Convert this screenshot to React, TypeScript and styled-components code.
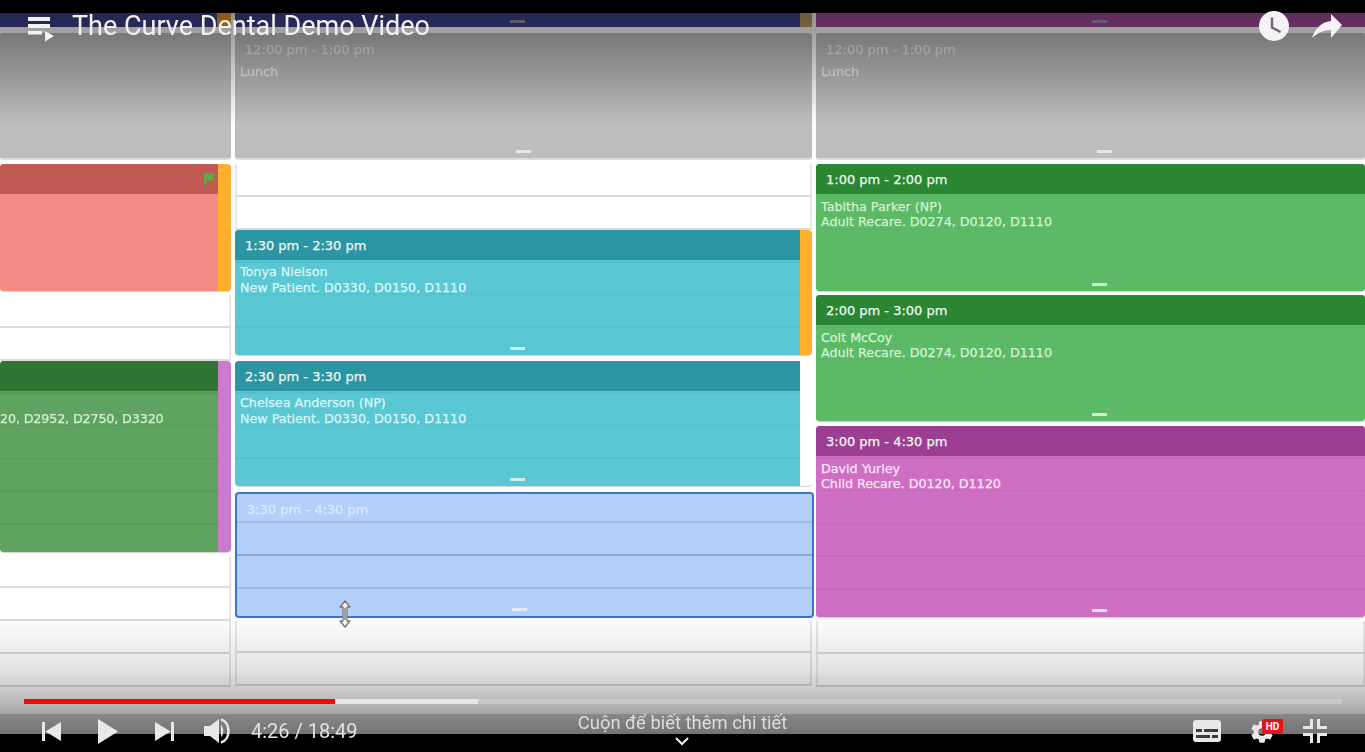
import React from "react";
import styled, { createGlobalStyle } from "styled-components";

const Global = createGlobalStyle`
  html, body { margin: 0; padding: 0; background: #000; overflow: hidden; }
  #root { width: 1365px; height: 752px; }
`;

const Stage = styled.div`
  position: relative;
  width: 1365px;
  height: 752px;
  background: #000;
  display: flex;
  flex-direction: column;
  overflow: hidden;
`;
const Letterbox = styled.div<{ $h: number }>`
  flex: 0 0 ${(p) => p.$h}px;
  background: #000;
`;
const Video = styled.div`
  position: relative;
  flex: 1;
  background: #fff;
  overflow: hidden;
`;
const Schedule = styled.div`
  display: grid;
  grid-template-columns: 231px 577px 549px;
  column-gap: 4px;
  height: 100%;
  filter: blur(0.5px);
  font-family: "DejaVu Sans", sans-serif;
  font-size: 12.7px;
  -webkit-text-stroke: 0.25px currentColor;
`;
const Column = styled.div`
  display: flex;
  flex-direction: column;
  height: 100%;
`;
const Sliver = styled.div<{ $bg: string; $strip: string; $stripW: number }>`
  position: relative;
  height: 14px;
  flex: none;
  margin-bottom: 6px;
  background: ${(p) => p.$bg};
  border-right: ${(p) => p.$stripW}px solid ${(p) => p.$strip};
`;
const Lunch = styled.div`
  position: relative;
  flex: none;
  height: 127px;
  margin-bottom: 4px;
  background: #bdbdbd;
  border-radius: 3px;
  border-bottom: 2px solid #dcdcdc;
  box-sizing: border-box;
  color: #efefef;
`;
const LunchTime = styled.div`
  height: 31px;
  padding-left: 10px;
  font-size: 13px;
  line-height: 33px;
  opacity: 0.8;
`;
const LunchLabel = styled.div`
  padding-left: 5px;
  line-height: 15px;
`;
const Slot = styled.div<{ $edge?: boolean }>`
  flex: none;
  height: 32.75px;
  box-sizing: border-box;
  background: #fff;
  border-bottom: 2px solid #dcdcdc;
  border-right: 2px solid #e8e8e8;
  border-left: ${(p) => (p.$edge ? "none" : "2px solid #e8e8e8")};
`;
const Appointment = styled.div<{ $h: number; $gap: number; $body: string; $strip?: string }>`
  position: relative;
  flex: none;
  display: flex;
  height: ${(p) => p.$h}px;
  margin-bottom: ${(p) => p.$gap}px;
  border-radius: 4px;
  overflow: hidden;
  background: ${(p) => p.$strip || p.$body};
  box-shadow: 0 1px 0 #d4d4d4;
`;
const ApptMain = styled.div<{ $body: string; $line: string }>`
  flex: 1;
  min-width: 0;
  display: flex;
  flex-direction: column;
  background-color: ${(p) => p.$body};
  background-image: repeating-linear-gradient(
    to bottom,
    transparent 0,
    transparent 31px,
    ${(p) => p.$line} 31px,
    ${(p) => p.$line} 32.75px
  );
`;
const Strip = styled.div<{ $w: number }>`
  flex: 0 0 ${(p) => p.$w}px;
`;
const ApptHead = styled.div<{ $bg: string }>`
  position: relative;
  flex: none;
  height: 30px;
  padding-left: 10px;
  font-size: 13px;
  line-height: 32px;
  color: #eef8ee;
  background: ${(p) => p.$bg};
  white-space: nowrap;
`;
const ApptBody = styled.div<{ $text: string; $clip?: boolean }>`
  padding: 4.5px 5px 0 ${(p) => (p.$clip ? 0 : 5)}px;
  letter-spacing: ${(p) => (p.$clip ? -0.13 : 0)}px;
  line-height: 15.5px;
  color: ${(p) => p.$text};
  white-space: nowrap;
`;
const Handle = styled.span<{ $x: number }>`
  position: absolute;
  bottom: 5px;
  left: ${(p) => p.$x}px;
  width: 15px;
  height: 3px;
  background: #e6f2f2;
  opacity: 0.85;
`;
const SliverHandle = styled(Handle)`
  bottom: 4px;
  background: #a2a2b8;
`;
const FlagMark = styled.svg`
  position: absolute;
  top: 8px;
  right: 1px;
`;
const Selected = styled.div`
  position: relative;
  flex: none;
  height: 126px;
  width: 579px;
  box-sizing: border-box;
  margin: 0 0 3px 0;
  border: 2px solid #3777cf;
  border-radius: 4px;
  background-color: #b3cffa;
  background-image: linear-gradient(#a0bae4, #a0bae4), linear-gradient(#8ca6d6, #8ca6d6), linear-gradient(#a0bae4, #a0bae4);
  background-repeat: no-repeat;
  background-size: 100% 2px;
  background-position: 0 27px, 0 60px, 0 93px;
`;
const SelectedTime = styled.div`
  padding-left: 10px;
  font-size: 13px;
  line-height: 31px;
  color: #dbe8fd;
`;
const TopShade = styled.div`
  position: absolute;
  left: 0;
  right: 0;
  top: 0;
  height: 110px;
  background: linear-gradient(to bottom, rgba(0, 0, 0, 0.42), rgba(0, 0, 0, 0.36) 20%, rgba(0, 0, 0, 0));
  pointer-events: none;
`;
const BottomShade = styled.div`
  position: absolute;
  left: 0;
  right: 0;
  bottom: 0;
  height: 121px;
  background: linear-gradient(
    to bottom,
    rgba(0, 0, 0, 0) 0,
    rgba(0, 0, 0, 0.1) 45%,
    rgba(0, 0, 0, 0.22) 66%,
    rgba(0, 0, 0, 0.35) 83%,
    rgba(0, 0, 0, 0.47) 84%,
    rgba(0, 0, 0, 0.55) 100%
  );
  pointer-events: none;
`;
const Cursor = styled.svg`
  position: absolute;
  left: 338px;
  top: 600px;
`;
const TopBar = styled.div`
  position: absolute;
  top: 0;
  left: 0;
  right: 0;
  height: 52px;
  display: flex;
  align-items: center;
  padding: 0 22px 0 28px;
`;
const PlaylistIcon = styled.svg`
  margin-top: 6px;
`;
const Title = styled.div`
  flex: 1;
  margin-left: 18px;
  font: 400 27px/1 Roboto, sans-serif;
  color: #f1f1f1;
`;
const TopActions = styled.div`
  display: flex;
  align-items: center;
  gap: 22px;
`;
const ProgressTrack = styled.div`
  position: absolute;
  left: 24px;
  top: 699px;
  width: 1318px;
  height: 5px;
  background: rgba(255, 255, 255, 0.2);
  display: flex;
`;
const Played = styled.div`
  width: 311px;
  background: #fb0606;
`;
const Buffered = styled.div`
  width: 143px;
  background: rgba(255, 255, 255, 0.55);
`;
const Controls = styled.div`
  position: absolute;
  left: 0;
  right: 0;
  top: 712px;
  height: 40px;
  display: grid;
  grid-template-columns: 1fr auto 1fr;
  font-family: Roboto, sans-serif;
`;
const LeftControls = styled.div`
  display: flex;
  align-items: center;
  height: 38px;
  padding-left: 42px;
  gap: 37px;
`;
const VolumeIcon = styled.svg`
  margin-left: -7px;
`;
const Time = styled.div`
  margin-left: -18px;
  font-size: 20px;
  line-height: 1;
  color: #e2e2e2;
`;
const ScrollHint = styled.div`
  display: flex;
  flex-direction: column;
  align-items: center;
  font-size: 18.4px;
  line-height: 22px;
  color: #dcdcdc;
`;
const Chevron = styled.svg`
  margin-top: 3px;
`;
const RightControls = styled.div`
  display: flex;
  align-items: center;
  justify-content: flex-end;
  height: 38px;
  padding-right: 38px;
`;
const SettingsWrap = styled.div`
  position: relative;
  width: 34px;
  height: 24px;
  margin: 0 20px 0 28px;
`;
const HdBadge = styled.span`
  position: absolute;
  right: 0;
  top: 0;
  width: 21px;
  height: 15px;
  border-radius: 2px;
  background: #e1141c;
  color: #fff;
  font: 700 10px/15px Roboto, sans-serif;
  text-align: center;
`;

const HEAD_TEAL = "#2b95a4";
const BODY_TEAL = "#59c8d4";
const HEAD_GREEN = "#2a8632";
const BODY_GREEN = "#5cba66";
const ORANGE = "#ffb02e";

type ApptProps = {
  h: number;
  gap: number;
  head: string;
  body: string;
  line: string;
  text: string;
  time?: string;
  lines?: string[];
  strip?: string;
  stripW?: number;
  handle?: number;
  clipLeft?: boolean;
  flag?: boolean;
};

function Appt({ h, gap, head, body, line, text, time, lines = [], strip, stripW = 0, handle, clipLeft, flag }: ApptProps) {
  return (
    <Appointment $h={h} $gap={gap} $body={body} $strip={strip}>
      <ApptMain $body={body} $line={line}>
        <ApptHead $bg={head}>
          {time}
          {flag && (
            <FlagMark width="14" height="14" viewBox="0 0 14 14">
              <path d="M1 1 L12 2 L10 5 L12 9 L3 8 L3 13 L1 13 Z" fill="#58ad3f" />
            </FlagMark>
          )}
        </ApptHead>
        <ApptBody $text={text} $clip={clipLeft}>
          {lines.map((l) => (
            <div key={l}>{l}</div>
          ))}
        </ApptBody>
      </ApptMain>
      {stripW > 0 && <Strip $w={stripW} />}
      {handle !== undefined && <Handle $x={handle} />}
    </Appointment>
  );
}

const Slots = ({ n, edge }: { n: number; edge?: boolean }) => (
  <>
    {Array.from({ length: n }, (_, i) => (
      <Slot key={i} $edge={edge} />
    ))}
  </>
);

const LunchBlock = ({ text, handle }: { text: boolean; handle: number }) => (
  <Lunch>
    {text && (
      <>
        <LunchTime>12:00 pm - 1:00 pm</LunchTime>
        <LunchLabel>Lunch</LunchLabel>
        <Handle $x={handle} />
      </>
    )}
  </Lunch>
);

export default function App() {
  return (
    <Stage>
      <Global />
      <Letterbox $h={13} />
      <Video>
        <Schedule>
          <Column>
            <Sliver $bg="#3f4390" $strip="#e8a028" $stripW={14} />
            <LunchBlock text={false} handle={0} />
            <Appt
              h={127}
              gap={4}
              head="#c05a54"
              body="#f48d85"
              line="rgba(190,90,85,.04)"
              text="#fff"
              strip={ORANGE}
              stripW={13}
              flag
            />
            <Slots n={2} edge />
            <Appt
              h={191}
              gap={4}
              head="#2e7534"
              body="#5ea35f"
              line="rgba(40,90,45,.12)"
              text="#d3efd0"
              strip="#cc7ad0"
              stripW={13}
              clipLeft
              lines={["\u00a0", "20, D2952, D2750, D3320"]}
            />
            <Slots n={4} edge />
          </Column>
          <Column>
            <Sliver $bg="#3f4390" $strip="#bda06a" $stripW={12}>
              <SliverHandle $x={275} />
            </Sliver>
            <LunchBlock text handle={281} />
            <Slots n={2} />
            <Appt
              h={125}
              gap={6}
              head={HEAD_TEAL}
              body={BODY_TEAL}
              line="rgba(30,120,135,.1)"
              text="#dcf6f9"
              time="1:30 pm - 2:30 pm"
              lines={["Tonya Nielson", "New Patient. D0330, D0150, D1110"]}
              strip={ORANGE}
              stripW={12}
              handle={275}
            />
            <Appt
              h={125}
              gap={6}
              head={HEAD_TEAL}
              body={BODY_TEAL}
              line="rgba(30,120,135,.1)"
              text="#dcf6f9"
              time="2:30 pm - 3:30 pm"
              lines={["Chelsea Anderson (NP)", "New Patient. D0330, D0150, D1110"]}
              strip="#fff"
              stripW={12}
              handle={275}
            />
            <Selected>
              <SelectedTime>3:30 pm - 4:30 pm</SelectedTime>
              <Handle $x={275} />
            </Selected>
            <Slots n={2} />
          </Column>
          <Column>
            <Sliver $bg="#a34f9f" $strip="#a34f9f" $stripW={0}>
              <SliverHandle $x={276} />
            </Sliver>
            <LunchBlock text handle={281} />
            <Appt
              h={127}
              gap={4}
              head={HEAD_GREEN}
              body={BODY_GREEN}
              line="rgba(30,110,40,.05)"
              text="#d3f2d5"
              time="1:00 pm - 2:00 pm"
              lines={["Tabitha Parker (NP)", "Adult Recare. D0274, D0120, D1110"]}
              handle={276}
            />
            <Appt
              h={126}
              gap={5}
              head={HEAD_GREEN}
              body={BODY_GREEN}
              line="rgba(30,110,40,.05)"
              text="#d3f2d5"
              time="2:00 pm - 3:00 pm"
              lines={["Colt McCoy", "Adult Recare. D0274, D0120, D1110"]}
              handle={276}
            />
            <Appt
              h={191}
              gap={4}
              head="#9c3f93"
              body="#cf6fc4"
              line="rgba(130,50,125,.1)"
              text="#fbe6f8"
              time="3:00 pm - 4:30 pm"
              lines={["David Yurley", "Child Recare. D0120, D1120"]}
              handle={276}
            />
            <Slots n={2} />
          </Column>
        </Schedule>
        <TopShade />
        <BottomShade />
      </Video>
      <Letterbox $h={18} />

      <Cursor width="14" height="28" viewBox="0 0 14 28">
        <path
          d="M7 1 L12 7 L9 7 L9 21 L12 21 L7 27 L2 21 L5 21 L5 7 L2 7 Z"
          fill="#f6f6f6"
          stroke="#777"
          strokeWidth="1.3"
          strokeLinejoin="round"
        />
        <path d="M6 8 H8 V20 H6 Z" fill="#9a9eae" />
      </Cursor>

      <TopBar>
        <PlaylistIcon width="26" height="26" viewBox="0 0 26 26">
          <path d="M0 1 H22 V5 H0 Z M0 8 H22 V12 H0 Z M0 15 H14 V18.500 H0 Z" fill="#f2f2f2" />
          <path d="M17 15 L26 20 L17 25.500 Z" fill="#f2f2f2" />
        </PlaylistIcon>
        <Title>The Curve Dental Demo Video</Title>
        <TopActions>
          <svg width="32" height="32" viewBox="0 0 32 32">
            <circle cx="16" cy="16" r="15" fill="#f4f2f4" />
            <path d="M14 7.500 V17.500 L22.500 22" fill="none" stroke="#6b6670" strokeWidth="2.4" />
          </svg>
          <svg width="31" height="26" viewBox="0 0 31 26">
            <path d="M19 1 L30 12 L19 25 L19 17 C12 17 5 20 0 25 C3 16 9 9 19 8 Z" fill="#f5f3f5" />
          </svg>
        </TopActions>
      </TopBar>

      <ProgressTrack>
        <Played />
        <Buffered />
      </ProgressTrack>

      <Controls>
        <LeftControls>
          <svg width="19" height="19" viewBox="0 0 19 19">
            <path d="M0 0 H3 V19 H0 Z M19 0 V19 L3.500 9.500 Z" fill="#e8e8e8" />
          </svg>
          <svg width="20" height="25" viewBox="0 0 20 25">
            <path d="M0 0 L20 12.500 L0 25 Z" fill="#e8e8e8" />
          </svg>
          <svg width="19" height="19" viewBox="0 0 19 19">
            <path d="M0 0 L15.500 9.500 L0 19 Z M16 0 H19 V19 H16 Z" fill="#e8e8e8" />
          </svg>
          <VolumeIcon width="28" height="26" viewBox="0 0 28 26">
            <path d="M0 8 H6 L15 1 V25 L6 18 H0 Z" fill="#e8e8e8" />
            <path d="M17 7 C20 9 20 17 17 19 Z" fill="#e8e8e8" />
            <path d="M17 1.500 C27 4 27 22 17 24.500" fill="none" stroke="#e8e8e8" strokeWidth="2.600" />
          </VolumeIcon>
          <Time>4:26 / 18:49</Time>
        </LeftControls>
        <ScrollHint>
          Cuộn để biết thêm chi tiết
          <Chevron width="14" height="9" viewBox="0 0 14 9">
            <path d="M1 1 L7 7 L13 1" fill="none" stroke="#f0f0f0" strokeWidth="2" />
          </Chevron>
        </ScrollHint>
        <RightControls>
          <svg width="28" height="22" viewBox="0 0 28 22">
            <rect x="0" y="0" width="28" height="22" rx="3" fill="#e8e8e8" />
            <path d="M3 9 H9 V12 H3 Z M11 9 H25 V12 H11 Z M3 15 H17 V18 H3 Z M19 15 H25 V18 H19 Z" fill="#3b3b3b" />
          </svg>
          <SettingsWrap>
            <svg width="26" height="26" viewBox="0 0 24 24">
              <path
                d="M19.400 13c.1-.3.1-.7.1-1s0-.7-.1-1l2.100-1.600c.2-.2.2-.4.1-.6l-2-3.500c-.1-.2-.4-.3-.6-.2l-2.500 1c-.5-.4-1.100-.7-1.700-1l-.4-2.600C14.400 2.200 14.200 2 14 2h-4c-.2 0-.4.2-.5.4l-.4 2.600c-.6.3-1.200.6-1.700 1l-2.500-1c-.2-.1-.5 0-.6.2l-2 3.500c-.1.2-.1.4.1.6L4.500 11c0 .3-.1.700-.1 1s0 .7.1 1l-2.100 1.600c-.2.2-.2.4-.1.6l2 3.500c.1.2.4.3.6.2l2.500-1c.5.4 1.100.7 1.700 1l.4 2.600c.1.2.3.4.5.4h4c.2 0 .4-.2.5-.4l.4-2.600c.6-.3 1.200-.6 1.700-1l2.500 1c.2.1.5 0 .6-.2l2-3.500c.1-.2.1-.4-.1-.6L19.400 13zM12 15.500a3.500 3.500 0 1 1 0-7 3.500 3.500 0 0 1 0 7z"
                fill="#e8e8e8"
              />
            </svg>
            <HdBadge>HD</HdBadge>
          </SettingsWrap>
          <svg width="24" height="24" viewBox="0 0 24 24">
            <path
              d="M7 0 H10 V10 H0 V7 H7 Z M14 0 H17 V7 H24 V10 H14 Z M0 14 H10 V24 H7 V17 H0 Z M14 14 H24 V17 H17 V24 H14 Z"
              fill="#e8e8e8"
            />
          </svg>
        </RightControls>
      </Controls>
    </Stage>
  );
}
